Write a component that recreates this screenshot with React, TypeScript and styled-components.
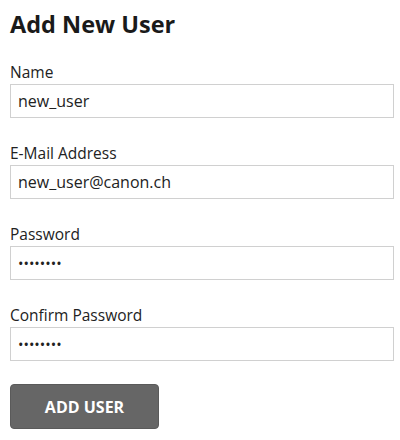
import React from "react";
import styled, { createGlobalStyle } from "styled-components";

const Global = createGlobalStyle`
  html, body { margin: 0; padding: 0; background: #fff; }
  body { font-family: "Open Sans", "Liberation Sans", sans-serif; color: #222; }
  * { box-sizing: border-box; }
`;

const Form = styled.form`
  display: flex;
  flex-direction: column;
  padding: 6px 6px 0 10px;
  width: 400px;
`;

const Title = styled.h1`
  margin: 0 0 20px 0;
  font-size: 23.5px;
  font-weight: 700;
  line-height: 36px;
  color: #1a1a1a;
`;

const Fields = styled.div`
  display: flex;
  flex-direction: column;
  gap: 25px;
`;

const Field = styled.div`
  display: flex;
  flex-direction: column;
  gap: 2px;
`;

const Label = styled.label`
  font-size: 15.5px;
  line-height: 20px;
  color: #222;
`;

const Input = styled.input`
  width: 384px;
  height: 34px;
  border: 1px solid #d0d0d0;
  padding: 0 7px;
  font-family: "Open Sans", "Liberation Sans", sans-serif;
  font-size: 16px;
  color: #222;
  outline: none;
  background: #fff;
  &[type="password"] { font-size: 14.5px; }
`;

const Button = styled.button`
  margin-top: 23px;
  width: 149px;
  height: 45px;
  border: 1px solid #5a5a5a;
  border-radius: 4px;
  background: #666;
  color: #fff;
  font-family: "Open Sans", "Liberation Sans", sans-serif;
  font-weight: 700;
  font-size: 16px;
  text-transform: uppercase;
  cursor: pointer;
`;

const fields = [
  { label: "Name", type: "text", value: "new_user" },
  { label: "E-Mail Address", type: "email", value: "new_user@canon.ch" },
  { label: "Password", type: "password", value: "abcdefgh" },
  { label: "Confirm Password", type: "password", value: "abcdefgh" },
];

export default function App() {
  return (
    <>
      <Global />
      <Form onSubmit={(e) => e.preventDefault()}>
        <Title>Add New User</Title>
        <Fields>
          {fields.map((f) => (
            <Field key={f.label}>
              <Label>{f.label}</Label>
              <Input type={f.type} defaultValue={f.value} readOnly />
            </Field>
          ))}
        </Fields>
        <Button type="submit">Add User</Button>
      </Form>
    </>
  );
}
